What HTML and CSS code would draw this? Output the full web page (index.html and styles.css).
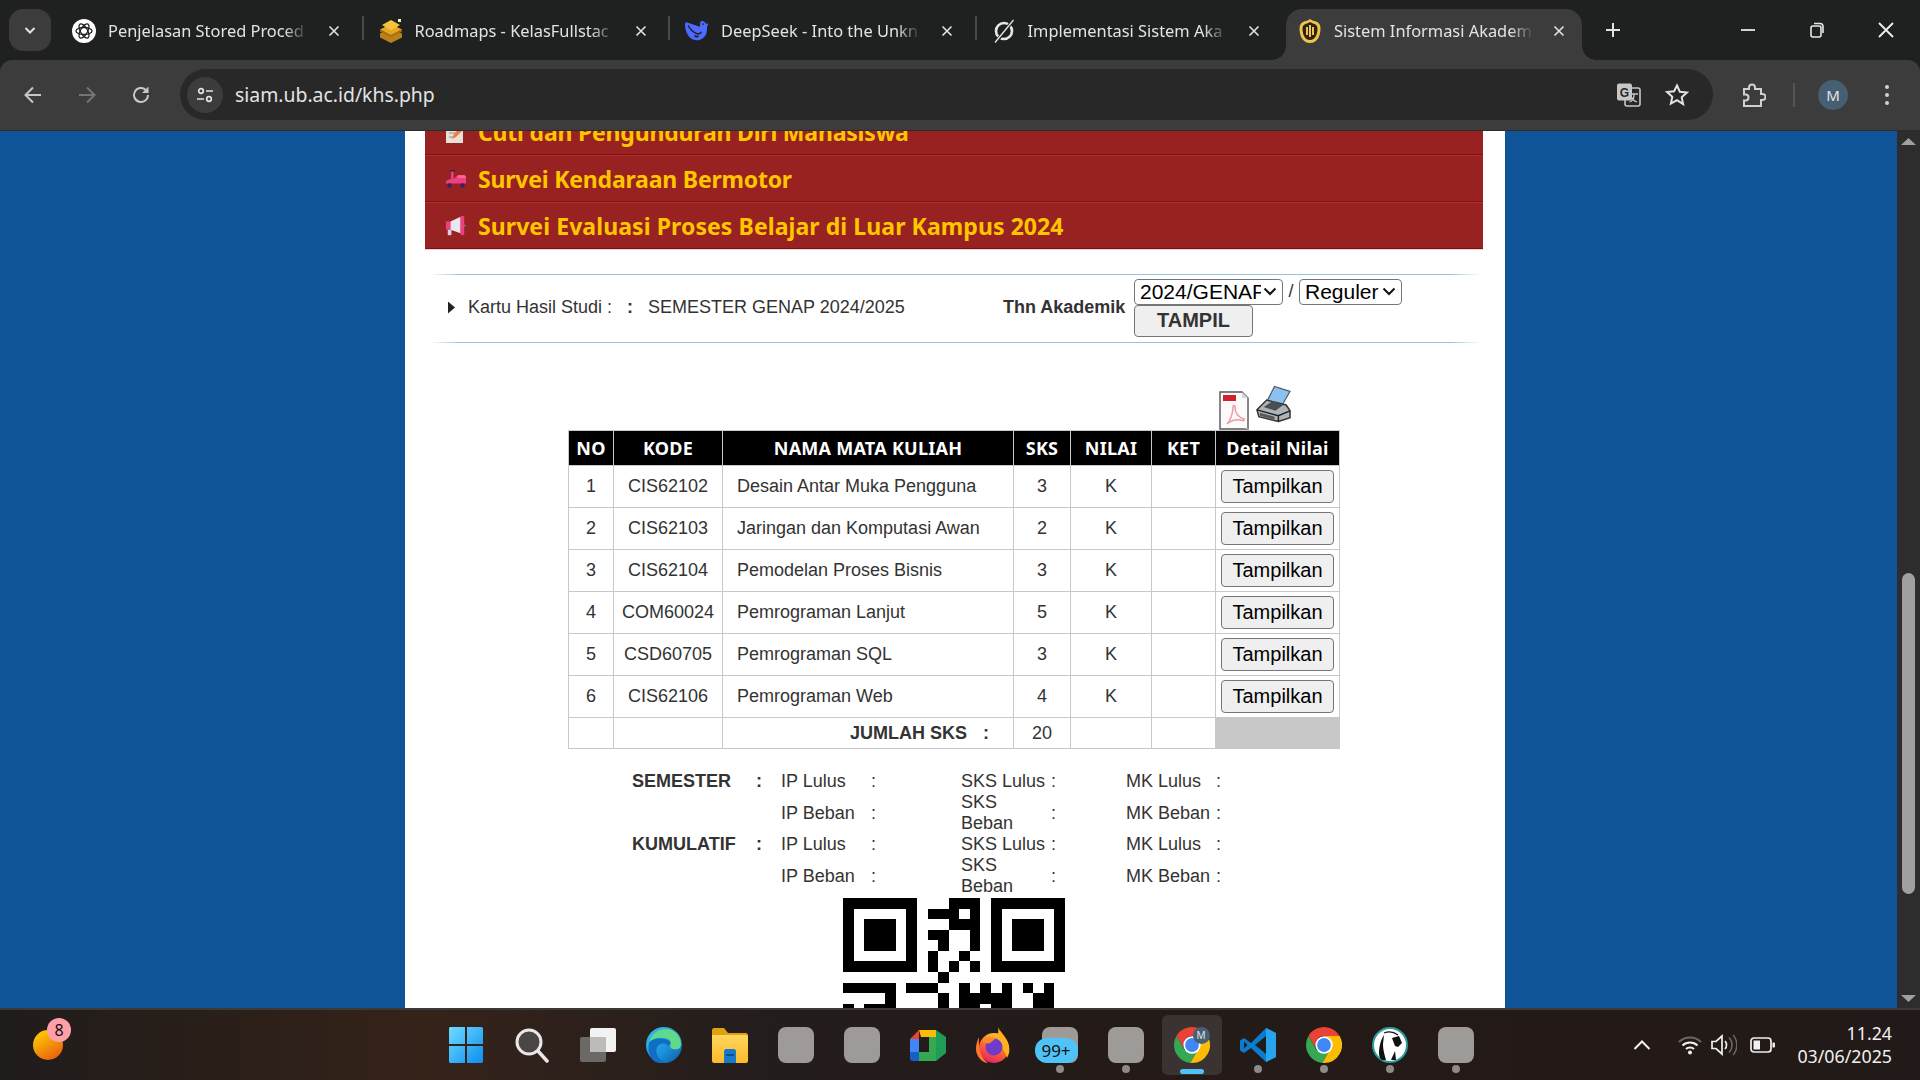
FILE: index.html
```html
<!DOCTYPE html>
<html lang="id">
<head>
<meta charset="utf-8">
<title>Sistem Informasi Akademik</title>
<link rel="stylesheet" href="styles.css">
</head>
<body>
<svg class="defs" aria-hidden="true">
  <defs>
    <linearGradient id="gWin" x1="0" y1="0" x2="1" y2="1"><stop offset="0" stop-color="#6fdcff"/><stop offset="1" stop-color="#0c8df0"/></linearGradient>
    <linearGradient id="gSun" x1="0.2" y1="0" x2="0.8" y2="1"><stop offset="0" stop-color="#ffd000"/><stop offset="1" stop-color="#e85a10"/></linearGradient>
    <linearGradient id="gEdge" x1="0" y1="0" x2="1" y2="1"><stop offset="0" stop-color="#35c1f1"/><stop offset="0.6" stop-color="#1b8fd8"/><stop offset="1" stop-color="#0c59a4"/></linearGradient>
    <linearGradient id="gFolder" x1="0" y1="0" x2="0" y2="1"><stop offset="0" stop-color="#ffd65c"/><stop offset="1" stop-color="#fbb92d"/></linearGradient>
    <linearGradient id="gFox" x1="0.7" y1="0" x2="0.3" y2="1"><stop offset="0" stop-color="#ffcb2e"/><stop offset="0.5" stop-color="#ff6a2a"/><stop offset="1" stop-color="#e3206a"/></linearGradient>
    <symbol id="chrome" viewBox="0 0 24 24">
      <path fill="#ea4335" d="M12 0C7.6 0 3.7 2.4 1.6 6l5.2 9A6 6 0 0 1 12 6h10.4C20.3 2.4 16.4 0 12 0z"/>
      <path fill="#34a853" d="M1.6 6A12 12 0 0 0 10.9 23.95L16 15A6 6 0 0 1 6.8 15z"/>
      <path fill="#fbbc04" d="M22.4 6H12a6 6 0 0 1 4 9l-5.1 8.95 1.1.05A12 12 0 0 0 22.4 6z"/>
      <circle cx="12" cy="12" r="5.8" fill="#fff"/>
      <circle cx="12" cy="12" r="4.6" fill="#4285f4"/>
    </symbol>
    <symbol id="close-x" viewBox="0 0 16 16">
      <path d="M3.5 3.5l9 9M12.5 3.5l-9 9" fill="none" stroke="#e3e3e3" stroke-width="1.6"/>
    </symbol>
  </defs>
</svg>

<header class="tabstrip">
  <button class="tab-list" type="button" aria-label="Daftar tab">
    <svg class="ic16" viewBox="0 0 16 16"><path d="M3.5 6l4.5 4.500L12.500 6" fill="none" stroke="#e3e3e3" stroke-width="2"/></svg>
  </button>
  <div class="tab tab-sep">
    <svg class="favicon" viewBox="0 0 24 24"><circle cx="12" cy="12" r="12" fill="#fff"/><g fill="none" stroke="#222" stroke-width="1.300"><ellipse cx="12" cy="12" rx="8" ry="3.500"/><ellipse cx="12" cy="12" rx="8" ry="3.500" transform="rotate(60 12 12)"/><ellipse cx="12" cy="12" rx="8" ry="3.500" transform="rotate(120 12 12)"/></g></svg>
    <span class="tab-title">Penjelasan Stored Proced</span>
    <svg class="tab-close"><use href="#close-x"/></svg>
  </div>
  <div class="tab tab-sep">
    <svg class="favicon" viewBox="0 0 24 24"><path fill="#b9801b" d="M12 9l11 5.500v4L12 24 1 18.500v-4z"/><path fill="#e6a623" d="M12 5l11 5.500L12 16 1 10.500z"/><path fill="#f5c33b" d="M12 1l9 5-9 5.500L3 6z"/><path fill="#a86f12" d="M1 10.500l11 5.500 11-5.500v2L12 18 1 12.500z"/><path fill="#fff1a8" d="M19 0h3v3h-3z"/></svg>
    <span class="tab-title">Roadmaps - KelasFullstac</span>
    <svg class="tab-close"><use href="#close-x"/></svg>
  </div>
  <div class="tab tab-sep">
    <svg class="favicon" viewBox="0 0 26 24"><path fill="#4d6bfe" d="M25.500 3.500c-1 .700-2 .800-3 .500C21.500 1.500 19 .500 17.500 1.500c-2 1.500-.500 3.500-1.500 6L1.500 2.500C.500 2.300 0 3.500 0 5c0 9 5 17 12.500 17 5.500 0 10-3.500 11-9 .500-2.500 0-4 .500-5.500.300-1.500 1-2.500 1.500-4z"/><path fill="none" stroke="#1f2020" stroke-width="1.600" d="M3.500 6c2 4 5 7 8.500 8.500 2 1 4.500.500 6-1.500"/><path fill="#1f2020" d="M10 16c2 1 4 1.500 6 .500-1 2-3 3-4.500 2.500-1-.500-1.500-1.500-1.500-3z"/><circle cx="19.500" cy="4.500" r="1" fill="#1f2020"/></svg>
    <span class="tab-title">DeepSeek - Into the Unkn</span>
    <svg class="tab-close"><use href="#close-x"/></svg>
  </div>
  <div class="tab">
    <svg class="favicon" viewBox="0 0 24 24"><circle cx="12" cy="12" r="8" fill="none" stroke="#e8e8e8" stroke-width="2.600"/><path d="M21 1.500L4 23" fill="none" stroke="#1f2020" stroke-width="3.600"/><path d="M21.500 1L3 23.500" fill="none" stroke="#e8e8e8" stroke-width="1.300"/></svg>
    <span class="tab-title">Implementasi Sistem Aka</span>
    <svg class="tab-close"><use href="#close-x"/></svg>
  </div>
  <div class="tab tab-active">
    <svg class="favicon" viewBox="0 0 24 24"><path fill="#f2c14e" d="M12 0c2 1.500 4 2 6 2.500 3 1 4.500 3.500 4.500 7 0 7-3 14.500-10.500 14.500S1.500 16.500 1.500 9.500c0-3.500 1.500-6 4.500-7C8 2 10 1.500 12 0z"/><path fill="#2b2410" d="M12 3c1.500 1 3 1.500 4.500 2 2 .700 3 2.500 3 4.500 0 5.500-2 11.500-7.500 11.500S4.500 15 4.500 9.500c0-2 1-3.800 3-4.500C9 4.500 10.500 4 12 3z"/><path fill="#f2c14e" d="M11 6h2v12h-2zM8 8h2v8H8zM14 8h2v8h-2z"/></svg>
    <span class="tab-title">Sistem Informasi Akadem</span>
    <svg class="tab-close"><use href="#close-x"/></svg>
  </div>
  <button class="new-tab" type="button" aria-label="Tab baru">
    <svg class="ic18" viewBox="0 0 18 18"><path d="M9 2v14M2 9h14" fill="none" stroke="#e3e3e3" stroke-width="2"/></svg>
  </button>
  <div class="win-controls">
    <span class="win-btn"><svg class="ic18" viewBox="0 0 18 18"><path d="M2 9h14" fill="none" stroke="#e8e8e8" stroke-width="1.800"/></svg></span>
    <span class="win-btn"><svg class="ic18" viewBox="0 0 18 18"><rect x="3" y="5" width="10" height="11" rx="2" fill="none" stroke="#e8e8e8" stroke-width="1.600"/><path d="M6 2.500h6a3 3 0 0 1 3 3V12" fill="none" stroke="#e8e8e8" stroke-width="1.600"/></svg></span>
    <span class="win-btn"><svg class="ic18" viewBox="0 0 18 18"><path d="M2 2l14 14M16 2L2 16" fill="none" stroke="#f0f0f0" stroke-width="1.800"/></svg></span>
  </div>
</header>

<nav class="toolbar">
  <span class="nav-btn"><svg class="ic22" viewBox="0 0 22 22"><path d="M19 11H4M11 3.500L3.500 11l7.500 7.500" fill="none" stroke="#c7c7c7" stroke-width="2"/></svg></span>
  <span class="nav-btn"><svg class="ic22" viewBox="0 0 22 22"><path d="M3 11h15M11 3.500l7.500 7.500-7.500 7.500" fill="none" stroke="#757575" stroke-width="2"/></svg></span>
  <span class="nav-btn"><svg class="ic22" viewBox="0 0 22 22"><path d="M18 11a7 7 0 1 1-2.200-5.100L18 8" fill="none" stroke="#c7c7c7" stroke-width="2"/><path d="M18.500 2.500v6.500H12z" fill="#c7c7c7"/></svg></span>
  <div class="omnibox">
    <span class="site-chip"><svg class="ic18" viewBox="0 0 18 18"><g fill="none" stroke="#e3e3e3" stroke-width="1.700"><circle cx="5" cy="5" r="2.300"/><path d="M10 5h7M1 13h7"/><circle cx="13" cy="13" r="2.300"/></g></svg></span>
    <span class="url">siam.ub.ac.id/khs.php</span>
    <span class="omni-icon translate"><svg class="ic26" viewBox="0 0 26 26"><rect x="9" y="6" width="15" height="18" rx="2" fill="none" stroke="#c7c7c7" stroke-width="1.600"/><rect x="1" y="1.500" width="15" height="17" rx="2" fill="#c7c7c7"/><text class="g-letter" x="8.500" y="14.500">G</text><path d="M14 12h8M18 12v1c0 3-2 6-4.500 7M15 14c1 3 3 5 6 6" fill="none" stroke="#c7c7c7" stroke-width="1.300"/></svg></span>
    <span class="omni-icon"><svg class="ic24" viewBox="0 0 24 24"><path d="M12 2.500l2.900 6.300 6.900.8-5.100 4.700 1.400 6.800L12 17.100l-6.100 3.500 1.400-6.800-5.100-4.700 6.900-.8z" fill="none" stroke="#e3e3e3" stroke-width="2"/></svg></span>
  </div>
  <span class="ext-btn"><svg class="ic26" viewBox="0 0 26 26"><path d="M4 7h5V5.500a3 3 0 0 1 6 0V7h6v5h1.500a3 3 0 0 1 0 6H21v6H4v-5.500h1.500a3 3 0 0 0 0-6H4z" fill="none" stroke="#d0d0d0" stroke-width="2"/></svg></span>
  <span class="tool-div"></span>
  <span class="avatar">M</span>
  <span class="menu-dots"><i></i><i></i><i></i></span>
</nav>

<div class="viewport">
  <main class="sheet">
    <ul class="banner">
      <li class="banner-row banner-tight">
        <svg class="banner-icon" viewBox="0 0 22 22"><rect x="1" y="3" width="17" height="19" fill="#e6e0dc"/><path d="M4 8h10M4 12h6M4 16h5" stroke="#b5a9a4" stroke-width="1.500"/><path d="M7 18l2-5 9-10 3 3-10 10z" fill="#f47a3a"/></svg>
        <span>Cuti dan Pengunduran Diri Mahasiswa</span>
      </li>
      <li class="banner-row banner-tight">
        <svg class="banner-icon" viewBox="0 0 24 20"><path d="M8 1v9" stroke="#f0447f" stroke-width="2.500"/><path d="M5 1h6" stroke="#3a2060" stroke-width="1.600"/><path d="M1 13c2-3 5-3 8-3 2 0 3-4 6-4h5c2 0 3 2 3 4v5H1z" fill="#f03f80"/><path d="M14 6h7c1.500 0 2 2 2 3h-9z" fill="#ff6b8f"/><circle cx="5" cy="17" r="2.500" fill="#3a2060"/><circle cx="19" cy="17" r="2.500" fill="#3a2060"/></svg>
        <span>Survei Kendaraan Bermotor</span>
      </li>
      <li class="banner-row">
        <svg class="banner-icon" viewBox="0 0 24 22"><rect x="1" y="6" width="5" height="9" fill="#ef3f80"/><path d="M3 15h4v6H3z" fill="#d9d0e6"/><path d="M6 6l11-5v18L6 15z" fill="#ebe6ee"/><rect x="17" y="0" width="4" height="21" rx="1.500" fill="#ef3f80"/><path d="M21 9l2 1.500-2 1.500z" fill="#7a7a90"/></svg>
        <span>Survei Evaluasi Proses Belajar di Luar Kampus 2024</span>
      </li>
    </ul>

    <form class="khs-form">
      <span class="khs-arrow"></span>
      <span class="khs-label">Kartu Hasil Studi :</span>
      <b class="khs-colon">:</b>
      <span class="khs-sem">SEMESTER GENAP 2024/2025</span>
      <b class="khs-thn">Thn Akademik</b>
      <div class="khs-controls">
        <select class="sel sel-year"><option>2024/GENAP</option></select>
        <span class="slash">/</span>
        <select class="sel sel-type"><option>Reguler</option></select>
        <button class="btn-tampil" type="button">TAMPIL</button>
      </div>
    </form>

    <section class="result">
      <div class="export">
        <svg class="pdf-icon" viewBox="0 0 30 39"><path d="M1 1h22l6 6v31H1z" fill="#fbfbfb" stroke="#555" stroke-width="1.400"/><path d="M23 1v6h6z" fill="#d8d8d8"/><rect x="4" y="4" width="13" height="6" fill="#d3202a"/><path d="M8 33c3-3 6-10 6-17 0-2 2-2 2 0 0 6 3 10 9 12 1 .500 0 2-1.500 1.500C18 28 13 29 8 33z" fill="none" stroke="#ef9aa4" stroke-width="1.500"/><path d="M29 37l-5 1h5z" fill="#bbb"/></svg>
        <svg class="print-icon" viewBox="0 0 38 38"><path d="M12 17L20 1l16 5-8 14z" fill="#8cc1ee" stroke="#4b5b6b" stroke-width="1.200"/><path d="M2 25l10-10 20 5 4 6v7l-12 4-20-5z" fill="#aeb4b8" stroke="#333" stroke-width="1.500"/><path d="M2 25l22 6 12-5M24 31v6" fill="none" stroke="#222" stroke-width="1.500"/><path d="M9 22l9-6 11 4-8 6z" fill="#4a4f54"/><path d="M5 28l15 4v3L5 31z" fill="#55595d"/></svg>
      </div>
      <table class="grades">
        <colgroup><col class="c-no"><col class="c-kode"><col class="c-nama"><col class="c-sks"><col class="c-nilai"><col class="c-ket"><col class="c-detail"></colgroup>
        <thead>
          <tr><th>NO</th><th>KODE</th><th>NAMA MATA KULIAH</th><th>SKS</th><th>NILAI</th><th>KET</th><th>Detail Nilai</th></tr>
        </thead>
        <tbody>
          <tr><td>1</td><td>CIS62102</td><td class="left">Desain Antar Muka Pengguna</td><td>3</td><td>K</td><td></td><td><button class="btn-detail" type="button">Tampilkan</button></td></tr>
          <tr><td>2</td><td>CIS62103</td><td class="left">Jaringan dan Komputasi Awan</td><td>2</td><td>K</td><td></td><td><button class="btn-detail" type="button">Tampilkan</button></td></tr>
          <tr><td>3</td><td>CIS62104</td><td class="left">Pemodelan Proses Bisnis</td><td>3</td><td>K</td><td></td><td><button class="btn-detail" type="button">Tampilkan</button></td></tr>
          <tr><td>4</td><td>COM60024</td><td class="left">Pemrograman Lanjut</td><td>5</td><td>K</td><td></td><td><button class="btn-detail" type="button">Tampilkan</button></td></tr>
          <tr><td>5</td><td>CSD60705</td><td class="left">Pemrograman SQL</td><td>3</td><td>K</td><td></td><td><button class="btn-detail" type="button">Tampilkan</button></td></tr>
          <tr><td>6</td><td>CIS62106</td><td class="left">Pemrograman Web</td><td>4</td><td>K</td><td></td><td><button class="btn-detail" type="button">Tampilkan</button></td></tr>
        </tbody>
        <tfoot>
          <tr><td></td><td></td><td class="total-label"><b>JUMLAH SKS</b><b class="total-colon">:</b></td><td>20</td><td></td><td></td><td class="gray"></td></tr>
        </tfoot>
      </table>
    </section>

    <table class="summary">
      <colgroup><col class="s-label"><col class="s-colon"><col class="s-ip"><col class="s-gap1"><col class="s-sks"><col class="s-gap2"><col class="s-mk"><col class="s-end"></colgroup>
      <tr><th>SEMESTER</th><th>:</th><td>IP Lulus</td><td>:</td><td>SKS Lulus</td><td>:</td><td>MK Lulus</td><td>:</td></tr>
      <tr><th></th><th></th><td>IP Beban</td><td>:</td><td>SKS<br>Beban</td><td>:</td><td>MK Beban</td><td>:</td></tr>
      <tr><th>KUMULATIF</th><th>:</th><td>IP Lulus</td><td>:</td><td>SKS Lulus</td><td>:</td><td>MK Lulus</td><td>:</td></tr>
      <tr><th></th><th></th><td>IP Beban</td><td>:</td><td>SKS<br>Beban</td><td>:</td><td>MK Beban</td><td>:</td></tr>
    </table>

    <svg class="qr" viewBox="0 0 21 21" shape-rendering="crispEdges">
      <path fill="#000" d="M0 0h7v7H0zM1 1v5h5V1zM2 2h3v3H2z" fill-rule="evenodd"/>
      <path fill="#000" d="M14 0h7v7h-7zM15 1v5h5V1zM16 2h3v3h-3z" fill-rule="evenodd"/>
      <path fill="#000" d="M10 0h3v1h-3zM8 1h3v1H8zM12 1h1v1h-1zM10 2h3v1h-3zM8 3h2v1H8zM12 3h1v1h-1zM9 4h1v1H9zM12 4h1v1h-1zM8 5h1v1H8zM11 5h1v1h-1zM8 6h1v1H8zM10 6h1v1h-1zM12 6h1v1h-1zM9 7h1v1H9z"/>
      <path fill="#000" d="M0 8h5v1H0zM6 8h3v1H6zM11 8h1v1h-1zM13 8h1v1h-1zM15 8h1v1h-1zM17 8h1v1h-1zM19 8h1v1h-1zM4 9h1v1H4zM9 9h1v1H9zM11 9h5v1h-5zM18 9h2v1h-2zM0 10h1v1H0zM2 10h3v1H2zM9 10h1v1H9zM11 10h2v1h-2zM14 10h2v1h-2zM18 10h2v1h-2z"/>
    </svg>
  </main>
  <aside class="scrollbar">
    <span class="arrow-up"></span>
    <span class="thumb"></span>
    <span class="arrow-down"></span>
  </aside>
</div>

<footer class="taskbar">
  <div class="weather">
    <svg class="weather-sun" viewBox="0 0 30 30"><circle cx="15" cy="15" r="15" fill="url(#gSun)"/></svg>
    <span class="weather-badge">8</span>
  </div>
  <div class="task-icons">
    <span class="task"><svg class="ic36" viewBox="0 0 36 36"><path fill="url(#gWin)" d="M1 1.500C1 .700 1.700 0 2.500 0H17v17H1zM19 0h14.500c.800 0 1.500.700 1.500 1.500V17H19zM1 19h16v17H2.500C1.700 36 1 35.300 1 34.500zM19 19h16v15.500c0 .800-.700 1.500-1.500 1.500H19z"/></svg></span>
    <span class="task"><svg class="ic36" viewBox="0 0 36 36"><circle cx="15" cy="15" r="12" fill="#4a4644" stroke="#e8e8e8" stroke-width="3"/><path d="M24 24l9 10" stroke="#e8e8e8" stroke-width="3.500" stroke-linecap="round"/></svg></span>
    <span class="task"><svg class="ic36" viewBox="0 0 36 36"><rect x="0" y="10" width="26" height="25" rx="2" fill="#6b6966"/><rect x="10" y="1" width="26" height="24" rx="2" fill="#f2f2f2"/><rect x="10" y="10" width="16" height="15" fill="#bdbbb9"/></svg></span>
    <span class="task"><svg class="ic36" viewBox="0 0 36 36"><circle cx="18" cy="18" r="18" fill="url(#gEdge)"/><path d="M3 16C5 6 13 2 20 2c9 0 15 7 15 15 0 5-4 6-8 5-5-1-1-5-3-8-3-4-16-5-21 2z" fill="#5fd98a"/><path d="M3 16c4-6 17-5 21-2 1 2 0 3-2 5-1-2-4-3-7-2-5 1-6 8-3 13 2 3 6 5 10 5-3 1-6 1-8 1C6 36 1 27 3 16z" fill="#0f6fc4"/></svg></span>
    <span class="task"><svg class="ic36" viewBox="0 0 36 36"><path d="M0 3c0-1 1-2 2-2h10l4 5h18c1 0 2 1 2 2v4H0z" fill="#e0a00f"/><path d="M0 8h34c1 0 2 1 2 2v24c0 1-1 2-2 2H2c-1 0-2-1-2-2z" fill="url(#gFolder)"/><path d="M12 24c0-1 1-2 2-2h8c1 0 2 1 2 2v12H12z" fill="#1a78c9"/><path d="M14 28h8" stroke="#0d4f8e" stroke-width="2"/></svg></span>
    <span class="task"><span class="gray-app"></span></span>
    <span class="task"><span class="gray-app"></span></span>
    <span class="task"><svg class="ic36" viewBox="0 0 36 36"><path d="M9 3h17v9h-7v-2h-8z" fill="#fbbc04"/><path d="M0 12h9v13H0z" fill="#4285f4"/><path d="M0 25h9v9H3c-2 0-3-1-3-3z" fill="#1a5fc4"/><path d="M9 25h17v9H9z" fill="#34a853"/><path d="M26 3v31l10-8V10z" fill="#1f9d57"/><path d="M19 10h7v15h-7z" fill="#34a853"/><path d="M9 3v9H0z" fill="#ea4335"/></svg></span>
    <span class="task"><svg class="ic36" viewBox="0 0 36 36"><circle cx="18" cy="21" r="15" fill="url(#gFox)"/><path d="M22 0c2 5 9 10 11 19 1 5 0 8-2 12-2-8-7-14-13-17 4-3 5-9 4-14z" fill="#ffb01f"/><path d="M3 10c-2 4-3 8-3 12 0 8 7 14 12 14-6-4-10-12-9-26z" fill="#ff7a2a"/><circle cx="18" cy="20" r="8.500" fill="#6f3bc9"/><path d="M7 13c3-2 8-3 12-1l-5 4c-2 1-5 0-7-3z" fill="#ff8a28"/></svg></span>
    <span class="task has-dot">
      <span class="gray-app"></span>
      <span class="count-badge">99+</span>
    </span>
    <span class="task has-dot"><span class="gray-app"></span></span>
    <span class="task task-active">
      <svg class="ic36"><use href="#chrome"/></svg>
      <span class="profile-badge">M</span>
    </span>
    <span class="task has-dot"><svg class="ic36" viewBox="0 0 36 36"><path d="M26 1l10 5v24l-10 5-15-14-7 5-4-2.500V13.500L4 11l7 5z" fill="#0a7ccf"/><path d="M26 1l10 5v24l-10 5z" fill="#28a5ea"/><path d="M26 9L15 18l11 9z" fill="#201c1c"/><path d="M4 14.500v7l3.500-3.500z" fill="#201c1c"/></svg></span>
    <span class="task has-dot"><svg class="ic36"><use href="#chrome"/></svg></span>
    <span class="task has-dot"><svg class="ic36" viewBox="0 0 36 36"><circle cx="18" cy="18" r="17" fill="#fff" stroke="#2a9d9d" stroke-width="2"/><path d="M20 11l7-2 3 7-4 4-3-1z" fill="#111"/><path d="M7 26c0-6 2-14 5-18l-1 9c0 5 1 9 3 16H10c-2-1-3-4-3-7z" fill="#111"/><path d="M23 24l1 9h-5z" fill="#111"/><path d="M12 6c5-2 10-1 14 2" fill="none" stroke="#111" stroke-width="1.200"/></svg></span>
    <span class="task has-dot"><span class="gray-app"></span></span>
  </div>
  <div class="tray">
    <svg class="tray-chev" viewBox="0 0 18 12"><path d="M1.500 10L9 2.500 16.500 10" fill="none" stroke="#f0f0f0" stroke-width="2"/></svg>
    <svg class="tray-wifi" viewBox="0 0 24 20"><path d="M1 7c6-6 16-6 22 0" fill="none" stroke="#6c6866" stroke-width="1.800"/><path d="M4.500 10.500c4-4 11-4 15 0M8 14c2-2 6-2 8 0" fill="none" stroke="#f0f0f0" stroke-width="2"/><circle cx="12" cy="17.500" r="2" fill="#f0f0f0"/></svg>
    <svg class="tray-vol" viewBox="0 0 26 22"><path d="M1 7.500h4l6-5.500v18l-6-5.500H1z" fill="none" stroke="#f0f0f0" stroke-width="1.700"/><path d="M14 7c2 2 2 6 0 8" fill="none" stroke="#f0f0f0" stroke-width="1.700"/><path d="M18 3.500c4 4 4 11 0 15M22 1c5 5 5 15 0 20" fill="none" stroke="#6c6866" stroke-width="1.500"/></svg>
    <svg class="tray-batt" viewBox="0 0 25 16"><rect x="1" y="1" width="20" height="14" rx="3" fill="none" stroke="#f0f0f0" stroke-width="1.700"/><rect x="3.500" y="3.500" width="6.500" height="9" fill="#f0f0f0"/><path d="M22.500 5.500h1.500a1 1 0 0 1 1 1v3a1 1 0 0 1-1 1h-1.500z" fill="#f0f0f0"/></svg>
    <div class="clock"><span>11.24</span><span>03/06/2025</span></div>
  </div>
</footer>
</body>
</html>
```
FILE: styles.css
```css
* { box-sizing: border-box; }
html, body { margin: 0; padding: 0; }
body {
  width: 1920px;
  height: 1080px;
  overflow: hidden;
  display: flex;
  flex-direction: column;
  background: #1f2020;
  font-family: "Liberation Sans", Arial, sans-serif;
}
.defs { position: absolute; width: 0; height: 0; }
.ic16 { width: 16px; height: 16px; display: block; }
.ic18 { width: 18px; height: 18px; display: block; }
.ic22 { width: 22px; height: 22px; display: block; }
.ic24 { width: 24px; height: 24px; display: block; }
.ic26 { width: 26px; height: 26px; display: block; }
.ic36 { width: 36px; height: 36px; display: block; }

/* tab strip */
.tabstrip {
  flex: 0 0 60px;
  display: flex;
  align-items: flex-end;
  padding-left: 9px;
  background: #1f2020;
}
.tab-list {
  flex: 0 0 42px;
  height: 42px;
  margin: 0 6px 9px 0;
  padding: 0;
  border: 0;
  border-radius: 14px;
  background: #3c3c3c;
  display: flex;
  align-items: center;
  justify-content: center;
}
.tab {
  flex: 0 0 306.5px;
  height: 51px;
  position: relative;
  display: flex;
  align-items: center;
  padding: 0 0 7px 15px;
  gap: 12px;
}
.tab-sep::after {
  content: "";
  position: absolute;
  right: 0;
  top: 7px;
  width: 2px;
  height: 24px;
  background: #484a4a;
}
.favicon { flex: 0 0 24px; width: 24px; height: 24px; display: block; }
.tab-title {
  flex: 0 0 200px;
  overflow: hidden;
  white-space: nowrap;
  font: 400 16.4px/24px "Noto Sans", sans-serif;
  color: #e3e3e3;
  -webkit-mask-image: linear-gradient(90deg, #000 88%, transparent);
  mask-image: linear-gradient(90deg, #000 88%, transparent);
}
.tab-close { flex: 0 0 16px; width: 16px; height: 16px; margin-left: 6px; }
.tab-active {
  flex: 0 0 296px;
  margin-left: 3px;
  padding-left: 12px;
  background: #3c3c3c;
  border-radius: 16px 16px 0 0;
}
.tab-active .tab-close { margin-left: 5px; }
.tab-active::before,
.tab-active::after {
  content: "";
  position: absolute;
  bottom: 0;
  width: 14px;
  height: 14px;
}
.tab-active::before { left: -14px; background: radial-gradient(circle at 0 0, transparent 13.5px, #3c3c3c 14px); }
.tab-active::after { right: -14px; background: radial-gradient(circle at 100% 0, transparent 13.5px, #3c3c3c 14px); }
.new-tab {
  flex: 0 0 36px;
  height: 36px;
  margin: 0 0 12px 13px;
  padding: 0;
  border: 0;
  background: none;
  display: flex;
  align-items: center;
  justify-content: center;
}
.win-controls { margin-left: auto; display: flex; align-self: stretch; }
.win-btn { width: 69px; display: flex; align-items: center; justify-content: center; }

/* toolbar */
.toolbar {
  flex: 0 0 71px;
  display: flex;
  align-items: center;
  padding: 0 0 1px 6px;
  background: #3c3c3c;
  border-radius: 12px 12px 0 0;
  border-bottom: 1px solid #2c2c2c;
}
.nav-btn { flex: 0 0 54px; display: flex; justify-content: center; }
.omnibox {
  flex: 0 0 1533px;
  height: 51px;
  margin-left: 12px;
  border-radius: 26px;
  background: #282828;
  display: flex;
  align-items: center;
  padding-left: 7px;
}
.site-chip {
  flex: 0 0 36px;
  height: 36px;
  border-radius: 50%;
  background: #3c3c3c;
  display: flex;
  align-items: center;
  justify-content: center;
}
.url {
  margin-left: 12px;
  font: 400 19.4px/26px "Noto Sans", sans-serif;
  color: #e3e3e3;
}
.omni-icon { flex: 0 0 48px; display: flex; justify-content: center; }
.translate { margin-left: auto; }
.omni-icon:last-child { margin-right: 12px; }
.g-letter { font: 700 12px "Liberation Sans", sans-serif; fill: #282828; text-anchor: middle; }
.ext-btn { flex: 0 0 26px; margin-left: 27px; }
.tool-div { flex: 0 0 2px; height: 24px; margin-left: 27px; background: #555; }
.avatar {
  flex: 0 0 30px;
  height: 30px;
  margin-left: 23px;
  border-radius: 50%;
  background: #475f73;
  color: #e3e3e3;
  font: 400 15px/30px "Noto Sans", sans-serif;
  text-align: center;
}
.menu-dots { margin-left: 37px; display: flex; flex-direction: column; gap: 4px; }
.menu-dots i { width: 4px; height: 4px; border-radius: 50%; background: #d0d0d0; display: block; }

/* page area */
.viewport {
  flex: 1 1 0;
  min-height: 0;
  display: flex;
  background: #0f5499;
  overflow: hidden;
}
.sheet {
  flex: 0 0 1100px;
  margin-left: 405px;
  padding: 0 22px 0 20px;
  background: #fff;
  color: #333;
  font-size: 18px;
}
.banner { list-style: none; margin: -23px 0 0; padding: 0; border-bottom: 1px solid #f3c9c9; }
.banner-row {
  height: 47px;
  display: flex;
  align-items: center;
  padding-left: 20px;
  gap: 11px;
  background: #982222;
  border-top: 1px solid #c22626;
  border-bottom: 1px solid #6f1818;
  color: #ffc600;
  font: 700 23px/28px "Noto Sans", sans-serif;
  letter-spacing: 0.08px;
  white-space: nowrap;
}
.banner-tight { letter-spacing: -0.2px; }
.banner-icon { flex: 0 0 22px; width: 22px; height: 22px; }

.khs-form {
  height: 69px;
  margin: 24px 3px 0 5px;
  padding: 0 0 2px 18px;
  display: flex;
  align-items: center;
  border-top: 1px solid;
  border-bottom: 1px solid;
  border-image: linear-gradient(90deg, transparent, #93c5d9 3%, #93c5d9 97%, transparent) 1;
}
.khs-arrow {
  flex: 0 0 7px;
  height: 12px;
  margin-right: 13px;
  background: #222;
  clip-path: polygon(0 0, 100% 50%, 0 100%);
}
.khs-label { flex: 0 0 159px; }
.khs-colon { flex: 0 0 21px; }
.khs-sem { flex: 0 0 355px; }
.khs-thn { flex: 0 0 131px; }
.khs-controls { flex: 0 0 300px; display: flex; flex-wrap: wrap; align-items: center; }
.sel {
  appearance: none;
  -webkit-appearance: none;
  height: 26px;
  padding: 0 21px 0 5px;
  border: 1px solid #767676;
  border-radius: 4px;
  background: #fff url("data:image/svg+xml,%3Csvg xmlns='http://www.w3.org/2000/svg' width='14' height='9' viewBox='0 0 14 9'%3E%3Cpath d='M1.500 1.500L7 7l5.500-5.500' fill='none' stroke='%23111' stroke-width='2'/%3E%3C/svg%3E") no-repeat right 5px center;
  color: #000;
  font: 21px "Liberation Sans", Arial, sans-serif;
}
.sel-year { width: 149px; }
.sel-type { width: 103px; }
.slash { width: 16px; text-align: center; }
.btn-tampil {
  flex: 0 0 119px;
  height: 32px;
  padding: 0;
  border: 1px solid #767676;
  border-radius: 4px;
  background: #efefef;
  color: #333;
  font: 700 20px "Liberation Sans", Arial, sans-serif;
}

.result { margin-left: 143px; width: 771px; }
.export { height: 87px; display: flex; justify-content: flex-end; align-items: flex-end; gap: 6px; padding-right: 47px; }
.pdf-icon { width: 30px; height: 39px; }
.print-icon { width: 37px; height: 38px; margin-bottom: 7px; }

.grades { width: 771px; table-layout: fixed; border-collapse: collapse; }
.c-no { width: 45px; }
.c-kode { width: 109px; }
.c-nama { width: 291px; }
.c-sks { width: 57px; }
.c-nilai { width: 81px; }
.c-ket { width: 64px; }
.c-detail { width: 124px; }
.grades th, .grades td { border: 1px solid #c8c8c8; padding: 0; text-align: center; }
.grades th {
  height: 35px;
  background: #000;
  color: #fff;
  font: 700 18px/24px "Noto Sans", sans-serif;
  letter-spacing: 0.25px;
  white-space: nowrap;
}
.grades tbody td { height: 42px; }
.grades tfoot td { height: 31px; }
.grades td.left { text-align: left; padding-left: 14px; }
.grades td.total-label { text-align: right; padding-right: 24px; }
.total-colon { margin-left: 16px; }
.grades td.gray { background: #c8c8c8; }
.btn-detail {
  width: 113px;
  height: 33px;
  padding: 0;
  display: block;
  margin: 0 auto;
  border: 1px solid #767676;
  border-radius: 4px;
  background: #efefef;
  color: #000;
  font: 20px "Liberation Sans", Arial, sans-serif;
}

.summary {
  margin: 22px 0 0 207px;
  table-layout: fixed;
  width: 616px;
  border-collapse: collapse;
  line-height: 21px;
}
.s-label { width: 124px; }
.s-colon { width: 25px; }
.s-ip { width: 90px; }
.s-gap1 { width: 90px; }
.s-sks { width: 90px; }
.s-gap2 { width: 75px; }
.s-mk { width: 90px; }
.s-end { width: 32px; }
.summary th, .summary td { padding: 0; text-align: left; vertical-align: middle; }
.summary th { font-weight: 700; }

.qr { display: block; width: 222px; height: 222px; margin: 1px auto 0; }

.scrollbar {
  flex: 0 0 23px;
  margin-left: auto;
  background: #2d2d2d;
  display: flex;
  flex-direction: column;
  align-items: center;
  padding: 7px 0 6px;
}
.arrow-up, .arrow-down { width: 15px; height: 7px; background: #a0a0a0; }
.arrow-up { clip-path: polygon(50% 0, 100% 100%, 0 100%); }
.arrow-down { clip-path: polygon(0 0, 100% 0, 50% 100%); margin-top: auto; }
.thumb { width: 13px; height: 321px; margin-top: 428px; border-radius: 7px; background: #a0a0a0; }

/* taskbar */
.taskbar {
  flex: 0 0 72px;
  display: flex;
  align-items: center;
  padding-left: 33px;
  background: linear-gradient(90deg, #201c1c 0%, #2a1f18 12%, #35231a 22%, #231d1c 40%, #241a17 65%, #221a18 100%);
  border-top: 2px solid #3c3a38;
}
.weather { position: relative; flex: 0 0 30px; height: 30px; }
.weather-sun { width: 30px; height: 30px; display: block; }
.weather-badge {
  position: absolute;
  left: 14px;
  top: -12px;
  width: 24px;
  height: 24px;
  border-radius: 50%;
  background: #ffa0a8;
  color: #111;
  font: 400 16px/24px "Noto Sans", sans-serif;
  text-align: center;
}
.task-icons { display: flex; margin-left: 369.5px; }
.task {
  position: relative;
  flex: 0 0 66px;
  height: 60px;
  display: flex;
  align-items: center;
  justify-content: center;
}
.gray-app { width: 36px; height: 36px; border-radius: 8px; background: #9e9a98; display: block; }
.has-dot::after {
  content: "";
  position: absolute;
  left: 29px;
  bottom: 2px;
  width: 8px;
  height: 8px;
  border-radius: 50%;
  background: #8e8a88;
}
.count-badge {
  position: absolute;
  left: 8px;
  top: 23px;
  width: 43px;
  height: 25px;
  border-radius: 12px;
  background: #4fc3f7;
  color: #111;
  font: 400 17px/25px "Noto Sans", sans-serif;
  text-align: center;
}
.task-active { background: #3a3332; border-radius: 6px; flex: 0 0 60px; margin: 0 3px; }
.task-active::after {
  content: "";
  position: absolute;
  left: 18px;
  bottom: 1px;
  width: 24px;
  height: 5px;
  border-radius: 3px;
  background: #4fc3f7;
}
.profile-badge {
  position: absolute;
  right: 12px;
  top: 12px;
  width: 17px;
  height: 17px;
  border-radius: 50%;
  background: #475f73;
  color: #e3e3e3;
  font: 400 10px/17px "Noto Sans", sans-serif;
  text-align: center;
}
.tray { margin-left: auto; display: flex; align-items: center; padding-right: 28px; }
.tray-chev { width: 18px; height: 12px; margin-right: 27px; }
.tray-wifi { width: 24px; height: 20px; margin-right: 9px; }
.tray-vol { width: 26px; height: 22px; margin-right: 13px; }
.tray-batt { width: 25px; height: 16px; margin-right: 22px; }
.clock {
  display: flex;
  flex-direction: column;
  align-items: flex-end;
  color: #f0f0f0;
  font: 400 17.8px/23px "Noto Sans", sans-serif;
}
```
